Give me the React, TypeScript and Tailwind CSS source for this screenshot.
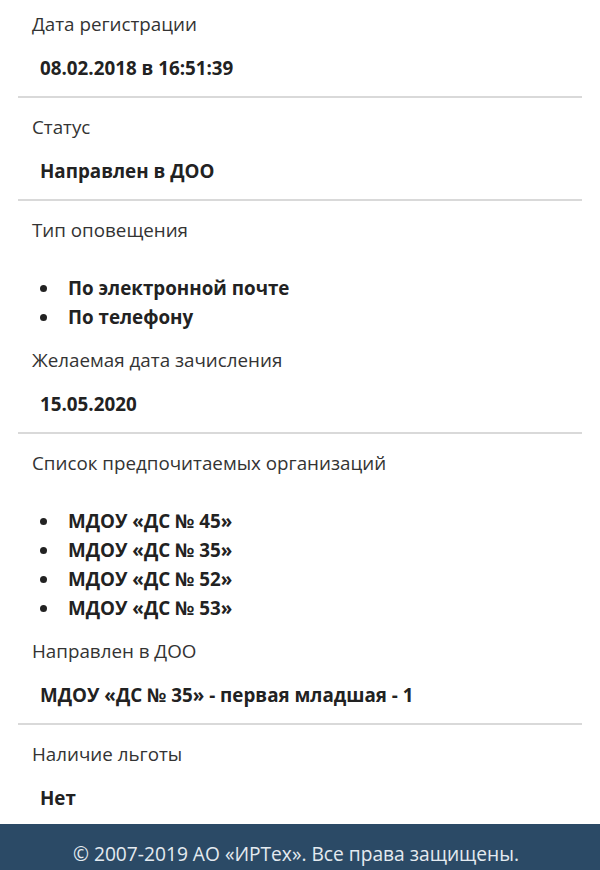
const font = { fontFamily: '"Open Sans", "Noto Sans", sans-serif' }

type Field = { label: string; value?: string; list?: string[]; border?: boolean }

const fields: Field[] = [
  { label: 'Дата регистрации', value: '08.02.2018 в 16:51:39', border: true },
  { label: 'Статус', value: 'Направлен в ДОО', border: true },
  { label: 'Тип оповещения', list: ['По электронной почте', 'По телефону'] },
  { label: 'Желаемая дата зачисления', value: '15.05.2020', border: true },
  {
    label: 'Список предпочитаемых организаций',
    list: ['МДОУ «ДС № 45»', 'МДОУ «ДС № 35»', 'МДОУ «ДС № 52»', 'МДОУ «ДС № 53»'],
  },
  { label: 'Направлен в ДОО', value: 'МДОУ «ДС № 35» - первая младшая - 1', border: true },
  { label: 'Наличие льготы', value: 'Нет' },
]

export default function App() {
  return (
    <div className="min-h-screen bg-white flex flex-col" style={font}>
      <div className="px-[18px] pt-[11px]">
        {fields.map((f, i) => (
          <div
            key={i}
            className={
              f.border
                ? 'pb-[15px] mb-[16px] border-b-2 border-[#d9d9d9]'
                : f.list
                  ? 'mb-[15px]'
                  : 'pb-[13px]'
            }
          >
            <div className="pl-[14px] text-[18.8px] leading-[26px] text-[#333]">{f.label}</div>
            {f.value && (
              <div className="mt-[18px] pl-[22px] text-[18.8px] leading-[26px] font-bold text-[#222]">
                {f.value}
              </div>
            )}
            {f.list && (
              <ul className="mt-[31px] pl-[42px] list-disc text-[18.8px] leading-[29px] font-bold text-[#222]">
                {f.list.map((item) => (
                  <li key={item} className="pl-[8px]">{item}</li>
                ))}
              </ul>
            )}
          </div>
        ))}
      </div>
      <footer className="bg-[#2b4a66] pt-[17px] pb-[17px] pr-[8px] text-center text-[19.2px] leading-[26px] text-[#e4eaf0]">
        © 2007-2019 АО «ИРТех». Все права защищены.
      </footer>
    </div>
  )
}
